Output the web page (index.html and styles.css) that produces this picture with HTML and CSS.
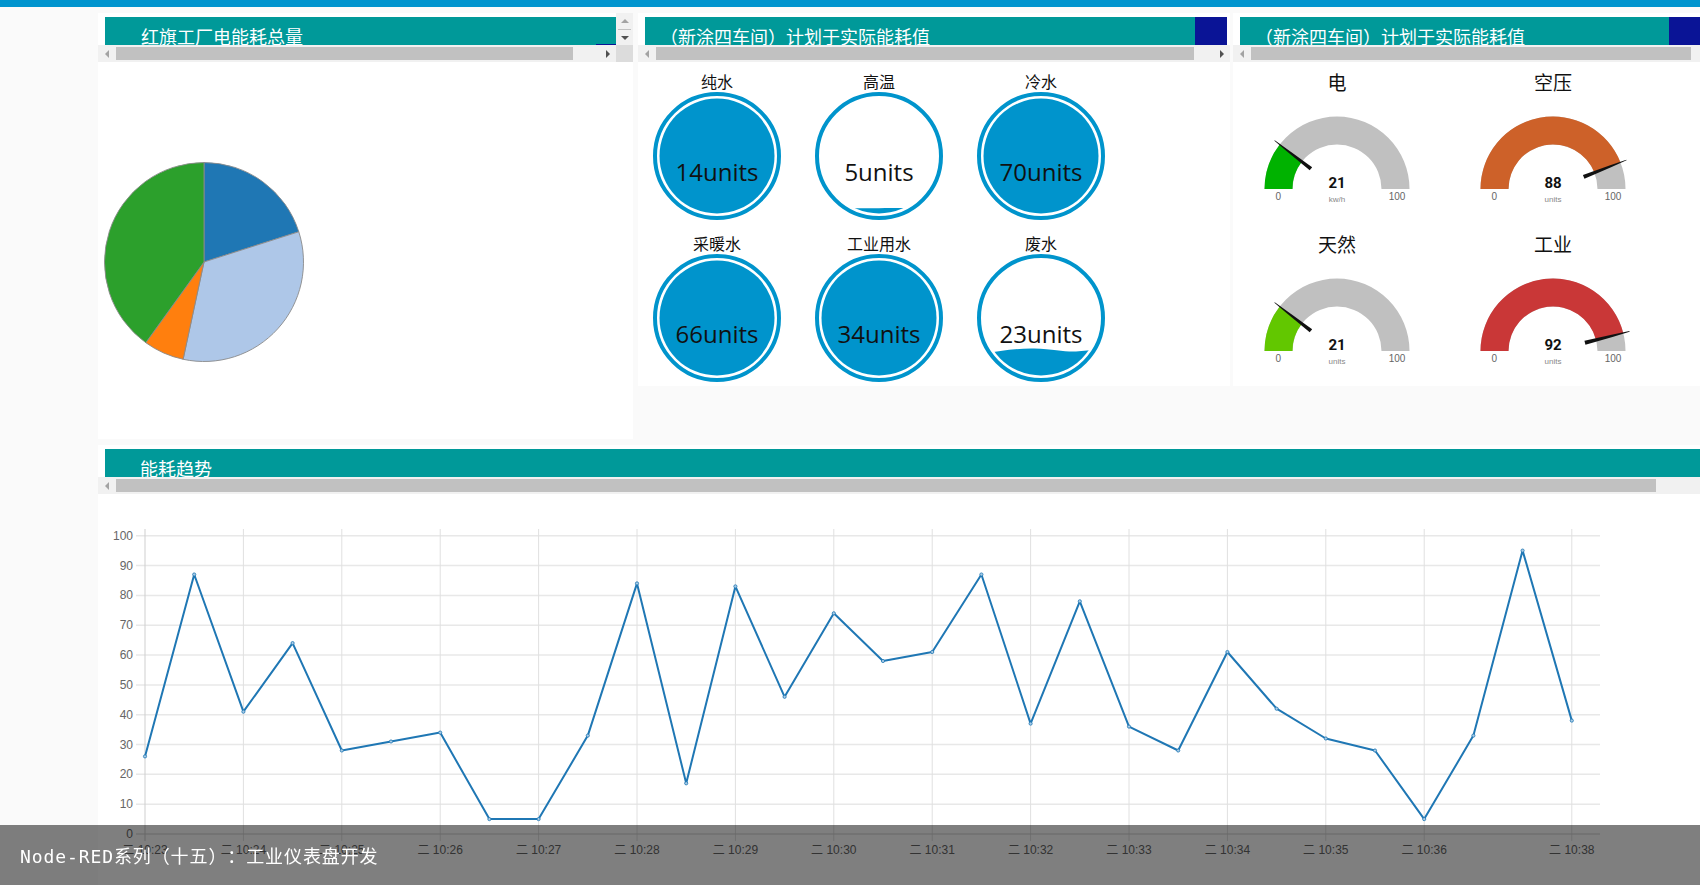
FILE: index.html
```html
<!DOCTYPE html>
<html lang="zh">
<head>
<meta charset="utf-8">
<title>Node-RED Dashboard</title>
<link rel="stylesheet" href="styles.css">
</head>
<body>
<div class="topbar"></div>
<main class="dash">
  <div class="row">
    <section class="card card-pie">
      <div class="head">
        <div class="head-main">
          <div class="bar bar-first">
            <div class="bar-title bar-title-pie">红旗工厂电能耗总量</div>
          </div>
          <div class="hscroll">
            <div class="sb-btn"><i class="arrow-l"></i></div>
            <div class="thumb thumb-pie"></div>
            <div class="sb-fill"></div>
            <div class="sb-btn"><i class="arrow-r"></i></div>
          </div>
        </div>
        <div class="vbar">
          <div class="vtrack">
            <div class="vbtn vbtn-up"><i class="arrow-u"></i></div>
            <div class="vline"></div>
            <div class="vbtn vbtn-down"><i class="arrow-d"></i></div>
          </div>
          <div class="corner"></div>
        </div>
      </div>
      <svg class="pie" width="535" height="377" viewBox="0 0 535 377">
        <path class="slice" fill="#1f77b4" d="M106,200 L106,100.5 A99.5,99.5 0 0 1 200.79,169.75 Z"/>
        <path class="slice" fill="#aec7e8" d="M106,200 L200.79,169.75 A99.5,99.5 0 0 1 85.14,297.29 Z"/>
        <path class="slice" fill="#ff7f0e" d="M106,200 L85.14,297.29 A99.5,99.5 0 0 1 47.79,280.70 Z"/>
        <path class="slice" fill="#2ca02c" d="M106,200 L47.79,280.70 A99.5,99.5 0 0 1 106,100.5 Z"/>
      </svg>
    </section>

    <section class="card card-liquid">
      <div class="bar">
        <div class="bar-title bar-title-paren">（新涂四车间）计划于实际能耗值</div>
        <div class="bar-navy"></div>
      </div>
      <div class="hscroll">
        <div class="sb-btn"><i class="arrow-l"></i></div>
        <div class="thumb thumb-liquid"></div>
        <div class="sb-fill"></div>
        <div class="sb-btn"><i class="arrow-r"></i></div>
      </div>
      <div class="lq-grid">
        <div class="lq-cell">
          <div class="lq-label">纯水</div>
          <svg class="lq" width="154" height="130" viewBox="0 0 154 130">
            <circle class="lq-ring" cx="77" cy="65" r="62"/>
            <circle class="lq-fill" cx="77" cy="65" r="57.5"/>
            <text class="lq-val" x="77" y="90">14units</text>
          </svg>
        </div>
        <div class="lq-cell">
          <div class="lq-label">高温</div>
          <svg class="lq" width="154" height="130" viewBox="0 0 154 130">
            <defs><clipPath id="clipHigh"><circle cx="77" cy="65" r="57.5"/></clipPath></defs>
            <circle class="lq-ring" cx="77" cy="65" r="62"/>
            <path class="lq-fill" clip-path="url(#clipHigh)" d="M0,118 C30,116.6 55,117.6 77,117.2 C100,116.8 125,117.8 154,117 L154,130 L0,130 Z"/>
            <text class="lq-val" x="77" y="90">5units</text>
          </svg>
        </div>
        <div class="lq-cell">
          <div class="lq-label">冷水</div>
          <svg class="lq" width="154" height="130" viewBox="0 0 154 130">
            <circle class="lq-ring" cx="77" cy="65" r="62"/>
            <circle class="lq-fill" cx="77" cy="65" r="57.5"/>
            <text class="lq-val" x="77" y="90">70units</text>
          </svg>
        </div>
        <div class="lq-cell">
          <div class="lq-label">采暖水</div>
          <svg class="lq" width="154" height="130" viewBox="0 0 154 130">
            <circle class="lq-ring" cx="77" cy="65" r="62"/>
            <circle class="lq-fill" cx="77" cy="65" r="57.5"/>
            <text class="lq-val" x="77" y="90">66units</text>
          </svg>
        </div>
        <div class="lq-cell">
          <div class="lq-label">工业用水</div>
          <svg class="lq" width="154" height="130" viewBox="0 0 154 130">
            <circle class="lq-ring" cx="77" cy="65" r="62"/>
            <circle class="lq-fill" cx="77" cy="65" r="57.5"/>
            <text class="lq-val" x="77" y="90">34units</text>
          </svg>
        </div>
        <div class="lq-cell">
          <div class="lq-label">废水</div>
          <svg class="lq" width="154" height="130" viewBox="0 0 154 130">
            <defs><clipPath id="clipWaste"><circle cx="77" cy="65" r="57.5"/></clipPath></defs>
            <circle class="lq-ring" cx="77" cy="65" r="62"/>
            <path class="lq-fill" clip-path="url(#clipWaste)" d="M0,102 C25,101 45,95 70,95.5 C90,96 100,99 112,98.5 C125,98 140,95 154,95 L154,130 L0,130 Z"/>
            <text class="lq-val" x="77" y="90">23units</text>
          </svg>
        </div>
      </div>
    </section>

    <section class="card card-gauge">
      <div class="bar">
        <div class="bar-title bar-title-paren">（新涂四车间）计划于实际能耗值</div>
        <div class="bar-navy"></div>
      </div>
      <div class="hscroll">
        <div class="sb-btn"><i class="arrow-l"></i></div>
        <div class="thumb thumb-gauge"></div>
        <div class="sb-fill"></div>
      </div>
      <div class="gg-grid">
        <div class="gg-cell">
          <div class="gg-title">电</div>
          <svg class="gg" width="208" height="128" viewBox="0 0 208 128">
            <path class="gg-bg" d="M31.5,96 A72.5,72.5 0 0 1 176.5,96 L148.5,96 A44.5,44.5 0 0 0 59.5,96 Z"/>
            <path fill="#00b200" d="M31.5,96 A72.5,72.5 0 0 1 46.71,51.56 L68.84,68.73 A44.5,44.5 0 0 0 59.5,96 Z"/>
            <polygon class="needle" points="-33,-2 -33,2 -62,1.1 -79,0.3 -79,-0.3 -62,-1.1" transform="translate(104,96) rotate(37.8)"/>
            <text class="gg-val" x="104" y="95">21</text>
            <text class="gg-unit" x="104" y="109">kw/h</text>
            <text class="gg-lim" x="45.3" y="107">0</text>
            <text class="gg-lim" x="164" y="107">100</text>
          </svg>
        </div>
        <div class="gg-cell">
          <div class="gg-title">空压</div>
          <svg class="gg" width="208" height="128" viewBox="0 0 208 128">
            <path class="gg-bg" d="M31.5,96 A72.5,72.5 0 0 1 176.5,96 L148.5,96 A44.5,44.5 0 0 0 59.5,96 Z"/>
            <path fill="#cd6129" d="M31.5,96 A72.5,72.5 0 0 1 171.41,69.31 L145.38,79.62 A44.5,44.5 0 0 0 59.5,96 Z"/>
            <polygon class="needle" points="-33,-2 -33,2 -62,1.1 -79,0.3 -79,-0.3 -62,-1.1" transform="translate(104,96) rotate(158.4)"/>
            <text class="gg-val" x="104" y="95">88</text>
            <text class="gg-unit" x="104" y="109">units</text>
            <text class="gg-lim" x="45.3" y="107">0</text>
            <text class="gg-lim" x="164" y="107">100</text>
          </svg>
        </div>
        <div class="gg-cell">
          <div class="gg-title">天然</div>
          <svg class="gg" width="208" height="128" viewBox="0 0 208 128">
            <path class="gg-bg" d="M31.5,96 A72.5,72.5 0 0 1 176.5,96 L148.5,96 A44.5,44.5 0 0 0 59.5,96 Z"/>
            <path fill="#62c700" d="M31.5,96 A72.5,72.5 0 0 1 46.71,51.56 L68.84,68.73 A44.5,44.5 0 0 0 59.5,96 Z"/>
            <polygon class="needle" points="-33,-2 -33,2 -62,1.1 -79,0.3 -79,-0.3 -62,-1.1" transform="translate(104,96) rotate(37.8)"/>
            <text class="gg-val" x="104" y="95">21</text>
            <text class="gg-unit" x="104" y="109">units</text>
            <text class="gg-lim" x="45.3" y="107">0</text>
            <text class="gg-lim" x="164" y="107">100</text>
          </svg>
        </div>
        <div class="gg-cell">
          <div class="gg-title">工业</div>
          <svg class="gg" width="208" height="128" viewBox="0 0 208 128">
            <path class="gg-bg" d="M31.5,96 A72.5,72.5 0 0 1 176.5,96 L148.5,96 A44.5,44.5 0 0 0 59.5,96 Z"/>
            <path fill="#c93737" d="M31.5,96 A72.5,72.5 0 0 1 174.22,77.97 L147.1,84.93 A44.5,44.5 0 0 0 59.5,96 Z"/>
            <polygon class="needle" points="-33,-2 -33,2 -62,1.1 -79,0.3 -79,-0.3 -62,-1.1" transform="translate(104,96) rotate(165.6)"/>
            <text class="gg-val" x="104" y="95">92</text>
            <text class="gg-unit" x="104" y="109">units</text>
            <text class="gg-lim" x="45.3" y="107">0</text>
            <text class="gg-lim" x="164" y="107">100</text>
          </svg>
        </div>
      </div>
    </section>
  </div>

  <section class="card card-chart">
    <div class="bar bar-wide">
      <div class="bar-title bar-title-chart">能耗趋势</div>
    </div>
    <div class="hscroll">
      <div class="sb-btn"><i class="arrow-l"></i></div>
      <div class="thumb thumb-chart"></div>
      <div class="sb-fill"></div>
    </div>
    <svg class="chart" width="1602" height="391" viewBox="98 494 1602 391">
      <g class="hgrid">
        <line x1="136" x2="1600" y1="804.2" y2="804.2"/>
        <line x1="136" x2="1600" y1="774.3" y2="774.3"/>
        <line x1="136" x2="1600" y1="744.5" y2="744.5"/>
        <line x1="136" x2="1600" y1="714.7" y2="714.7"/>
        <line x1="136" x2="1600" y1="684.9" y2="684.9"/>
        <line x1="136" x2="1600" y1="655" y2="655"/>
        <line x1="136" x2="1600" y1="625.2" y2="625.2"/>
        <line x1="136" x2="1600" y1="595.4" y2="595.4"/>
        <line x1="136" x2="1600" y1="565.5" y2="565.5"/>
        <line x1="136" x2="1600" y1="535.7" y2="535.7"/>
      </g>
      <g class="vgrid">
        <line x1="243.4" x2="243.4" y1="529" y2="841"/>
        <line x1="341.8" x2="341.8" y1="529" y2="841"/>
        <line x1="440.2" x2="440.2" y1="529" y2="841"/>
        <line x1="538.6" x2="538.6" y1="529" y2="841"/>
        <line x1="637" x2="637" y1="529" y2="841"/>
        <line x1="735.4" x2="735.4" y1="529" y2="841"/>
        <line x1="833.8" x2="833.8" y1="529" y2="841"/>
        <line x1="932.2" x2="932.2" y1="529" y2="841"/>
        <line x1="1030.6" x2="1030.6" y1="529" y2="841"/>
        <line x1="1129" x2="1129" y1="529" y2="841"/>
        <line x1="1227.4" x2="1227.4" y1="529" y2="841"/>
        <line x1="1325.8" x2="1325.8" y1="529" y2="841"/>
        <line x1="1424.2" x2="1424.2" y1="529" y2="841"/>
        <line x1="1571.8" x2="1571.8" y1="529" y2="841"/>
      </g>
      <g class="axis">
        <line x1="136" x2="1600" y1="834" y2="834"/>
        <line x1="145" x2="145" y1="529" y2="841"/>
      </g>
      <g class="ylab">
        <text x="133" y="838">0</text>
        <text x="133" y="808.2">10</text>
        <text x="133" y="778.3">20</text>
        <text x="133" y="748.5">30</text>
        <text x="133" y="718.7">40</text>
        <text x="133" y="688.9">50</text>
        <text x="133" y="659">60</text>
        <text x="133" y="629.2">70</text>
        <text x="133" y="599.4">80</text>
        <text x="133" y="569.5">90</text>
        <text x="133" y="539.7">100</text>
      </g>
      <g class="xlab">
        <text x="145" y="854">二 10:23</text>
        <text x="243.4" y="854">二 10:24</text>
        <text x="341.8" y="854">二 10:25</text>
        <text x="440.2" y="854">二 10:26</text>
        <text x="538.6" y="854">二 10:27</text>
        <text x="637" y="854">二 10:28</text>
        <text x="735.4" y="854">二 10:29</text>
        <text x="833.8" y="854">二 10:30</text>
        <text x="932.2" y="854">二 10:31</text>
        <text x="1030.6" y="854">二 10:32</text>
        <text x="1129" y="854">二 10:33</text>
        <text x="1227.4" y="854">二 10:34</text>
        <text x="1325.8" y="854">二 10:35</text>
        <text x="1424.2" y="854">二 10:36</text>
        <text x="1571.8" y="854">二 10:38</text>
      </g>
      <polyline class="series" points="145,756.4 194.2,574.5 243.4,711.7 292.6,643.1 341.8,750.5 391,741.5 440.2,732.6 489.4,819.1 538.6,819.1 587.8,735.6 637,583.4 686.2,783.3 735.4,586.4 784.6,696.8 833.8,613.3 883,661 932.2,652 981.4,574.5 1030.6,723.6 1079.8,601.3 1129,726.6 1178.2,750.5 1227.4,652 1276.6,708.7 1325.8,738.5 1375,750.5 1424.2,819.1 1473.4,735.6 1522.6,550.6 1571.8,720.6"/>
      <g class="dots">
        <circle cx="145" cy="756.4" r="1.6"/><circle cx="194.2" cy="574.5" r="1.6"/><circle cx="243.4" cy="711.7" r="1.6"/>
        <circle cx="292.6" cy="643.1" r="1.6"/><circle cx="341.8" cy="750.5" r="1.6"/><circle cx="391" cy="741.5" r="1.6"/>
        <circle cx="440.2" cy="732.6" r="1.6"/><circle cx="489.4" cy="819.1" r="1.6"/><circle cx="538.6" cy="819.1" r="1.6"/>
        <circle cx="587.8" cy="735.6" r="1.6"/><circle cx="637" cy="583.4" r="1.6"/><circle cx="686.2" cy="783.3" r="1.6"/>
        <circle cx="735.4" cy="586.4" r="1.6"/><circle cx="784.6" cy="696.8" r="1.6"/><circle cx="833.8" cy="613.3" r="1.6"/>
        <circle cx="883" cy="661" r="1.6"/><circle cx="932.2" cy="652" r="1.6"/><circle cx="981.4" cy="574.5" r="1.6"/>
        <circle cx="1030.6" cy="723.6" r="1.6"/><circle cx="1079.8" cy="601.3" r="1.6"/><circle cx="1129" cy="726.6" r="1.6"/>
        <circle cx="1178.2" cy="750.5" r="1.6"/><circle cx="1227.4" cy="652" r="1.6"/><circle cx="1276.6" cy="708.7" r="1.6"/>
        <circle cx="1325.8" cy="738.5" r="1.6"/><circle cx="1375" cy="750.5" r="1.6"/><circle cx="1424.2" cy="819.1" r="1.6"/>
        <circle cx="1473.4" cy="735.6" r="1.6"/><circle cx="1522.6" cy="550.6" r="1.6"/><circle cx="1571.8" cy="720.6" r="1.6"/>
      </g>
    </svg>
  </section>
</main>
<div class="caption">Node-RED系列（十五）：工业仪表盘开发</div>
</body>
</html>
```

FILE: styles.css
```css
html, body {
  margin: 0;
  padding: 0;
}
body {
  width: 1700px;
  height: 885px;
  overflow: hidden;
  background: #fafafa;
  font-family: "Noto Sans CJK SC", "Noto Sans", sans-serif;
  color: #111;
}
.topbar {
  height: 7px;
  background: #0094ce;
}
.dash {
  display: flex;
  flex-direction: column;
  gap: 6px;
  padding: 6px 0 0 98px;
}
.row {
  display: flex;
  align-items: flex-start;
}
.card {
  background: #fff;
  flex-shrink: 0;
  overflow: hidden;
}
.card-pie {
  width: 535px;
  height: 426px;
}
.card-liquid {
  width: 592px;
  height: 373px;
  margin-left: 5px;
}
.card-gauge {
  width: 471px;
  height: 373px;
  margin-left: 3px;
}
.card-chart {
  width: 1610px;
  height: 445px;
}

/* header bars */
.head {
  display: flex;
}
.head-main {
  flex: 1;
  min-width: 0;
}
.bar {
  display: flex;
  height: 28px;
  margin: 4px 3px 0 7px;
  overflow: hidden;
}
.bar-first {
  margin-right: 0;
}
.bar-wide {
  margin-right: 0;
}
.bar-title {
  flex: 1;
  min-width: 0;
  background: #009999;
  color: #fff;
  font-size: 18px;
  line-height: 18px;
  padding-top: 10px;
  white-space: nowrap;
  overflow: hidden;
}
.bar-title-pie {
  padding-left: 36px;
  background: linear-gradient(#0a1496, #0a1496) right bottom / 20px 1px no-repeat, #009999;
}
.bar-title-paren {
  padding-left: 15px;
}
.bar-title-chart {
  padding-left: 35px;
}
.bar-navy {
  width: 32px;
  flex-shrink: 0;
  background: #0a1496;
}

/* scrollbars */
.hscroll {
  display: flex;
  align-items: center;
  height: 17px;
  background: #f1f1f1;
}
.sb-btn {
  width: 17px;
  height: 17px;
  flex-shrink: 0;
  display: flex;
  align-items: center;
  justify-content: center;
}
.sb-fill {
  flex: 1;
}
.arrow-l {
  display: block;
  width: 0;
  height: 0;
  border-top: 4px solid transparent;
  border-bottom: 4px solid transparent;
  border-right: 4px solid #a3a3a3;
}
.arrow-r {
  display: block;
  width: 0;
  height: 0;
  border-top: 4px solid transparent;
  border-bottom: 4px solid transparent;
  border-left: 4px solid #505050;
}
.arrow-u {
  display: block;
  width: 0;
  height: 0;
  border-left: 4px solid transparent;
  border-right: 4px solid transparent;
  border-bottom: 4px solid #a3a3a3;
}
.arrow-d {
  display: block;
  width: 0;
  height: 0;
  border-left: 4px solid transparent;
  border-right: 4px solid transparent;
  border-top: 4px solid #505050;
}
.thumb {
  height: 13px;
  background: #c1c1c1;
  flex-shrink: 0;
  margin-left: 1px;
}
.thumb-pie { width: 457px; }
.thumb-liquid { width: 538px; }
.thumb-gauge { width: 440px; }
.thumb-chart { width: 1540px; }

.vbar {
  width: 17px;
  flex-shrink: 0;
  display: flex;
  flex-direction: column;
}
.vtrack {
  height: 32px;
  background: #f1f1f1;
  display: flex;
  flex-direction: column;
  align-items: center;
}
.vbtn {
  width: 17px;
  display: flex;
  align-items: center;
  justify-content: center;
}
.vbtn-up { height: 16px; }
.vbtn-down { height: 15px; }
.vline {
  width: 13px;
  height: 1px;
  background: #c1c1c1;
}
.corner {
  height: 17px;
  background: #dcdcdc;
}

/* pie */
.pie {
  display: block;
}
.slice {
  stroke: #8a8a8a;
  stroke-width: 0.9;
}

/* liquid gauges */
.lq-grid {
  display: grid;
  grid-template-columns: repeat(3, 154px);
  column-gap: 8px;
  row-gap: 12px;
  padding: 9px 0 0 2px;
}
.lq-label {
  font-size: 16px;
  line-height: 20px;
  text-align: center;
  color: #111;
}
.lq {
  display: block;
}
.lq-ring {
  fill: none;
  stroke: #0094cc;
  stroke-width: 4;
}
.lq-fill {
  fill: #0094cc;
}
.lq-val {
  font-family: "Open Sans", "Noto Sans", sans-serif;
  font-size: 24px;
  text-anchor: middle;
  fill: #111;
}

/* arc gauges */
.gg-grid {
  display: grid;
  grid-template-columns: repeat(2, 208px);
  column-gap: 8px;
  row-gap: 12px;
  padding-top: 9px;
}
.gg-title {
  font-size: 19px;
  line-height: 22px;
  text-align: center;
  color: #111;
}
.gg {
  display: block;
}
.gg-bg {
  fill: #c0c0c0;
}
.needle {
  fill: #111;
}
.gg-val {
  font-family: Roboto, "Liberation Sans", sans-serif;
  font-weight: bold;
  font-size: 15px;
  text-anchor: middle;
  fill: #111;
}
.gg-unit {
  font-family: "Liberation Sans", sans-serif;
  font-size: 8px;
  text-anchor: middle;
  fill: #888;
}
.gg-lim {
  font-family: "Liberation Sans", sans-serif;
  font-size: 10px;
  text-anchor: middle;
  fill: #666;
}

/* line chart */
.chart {
  display: block;
}
.hgrid line {
  stroke: #e8e8e8;
  stroke-width: 1.5;
}
.vgrid line {
  stroke: #e0e0e0;
  stroke-width: 1;
}
.axis line {
  stroke: #cfcfcf;
  stroke-width: 1;
}
.ylab text {
  font-family: "Liberation Sans", "Noto Sans CJK SC", sans-serif;
  font-size: 12px;
  fill: #666;
  text-anchor: end;
}
.xlab text {
  font-family: "Liberation Sans", "Noto Sans CJK SC", sans-serif;
  font-size: 12px;
  fill: #666;
  text-anchor: middle;
}
.series {
  fill: none;
  stroke: #1f77b4;
  stroke-width: 2;
  stroke-linejoin: round;
}
.dots circle {
  fill: #a9cbe6;
  stroke: #1f77b4;
  stroke-width: 0.8;
}

/* caption overlay */
.caption {
  position: fixed;
  left: 0;
  right: 0;
  bottom: 0;
  height: 60px;
  display: flex;
  align-items: center;
  padding-left: 20px;
  background: rgba(0, 0, 0, 0.5);
  color: #fff;
  font-family: "DejaVu Sans Mono", "Noto Sans CJK SC", monospace;
  font-size: 18px;
  letter-spacing: 0.9px;
  text-spacing-trim: space-all;
}
```
